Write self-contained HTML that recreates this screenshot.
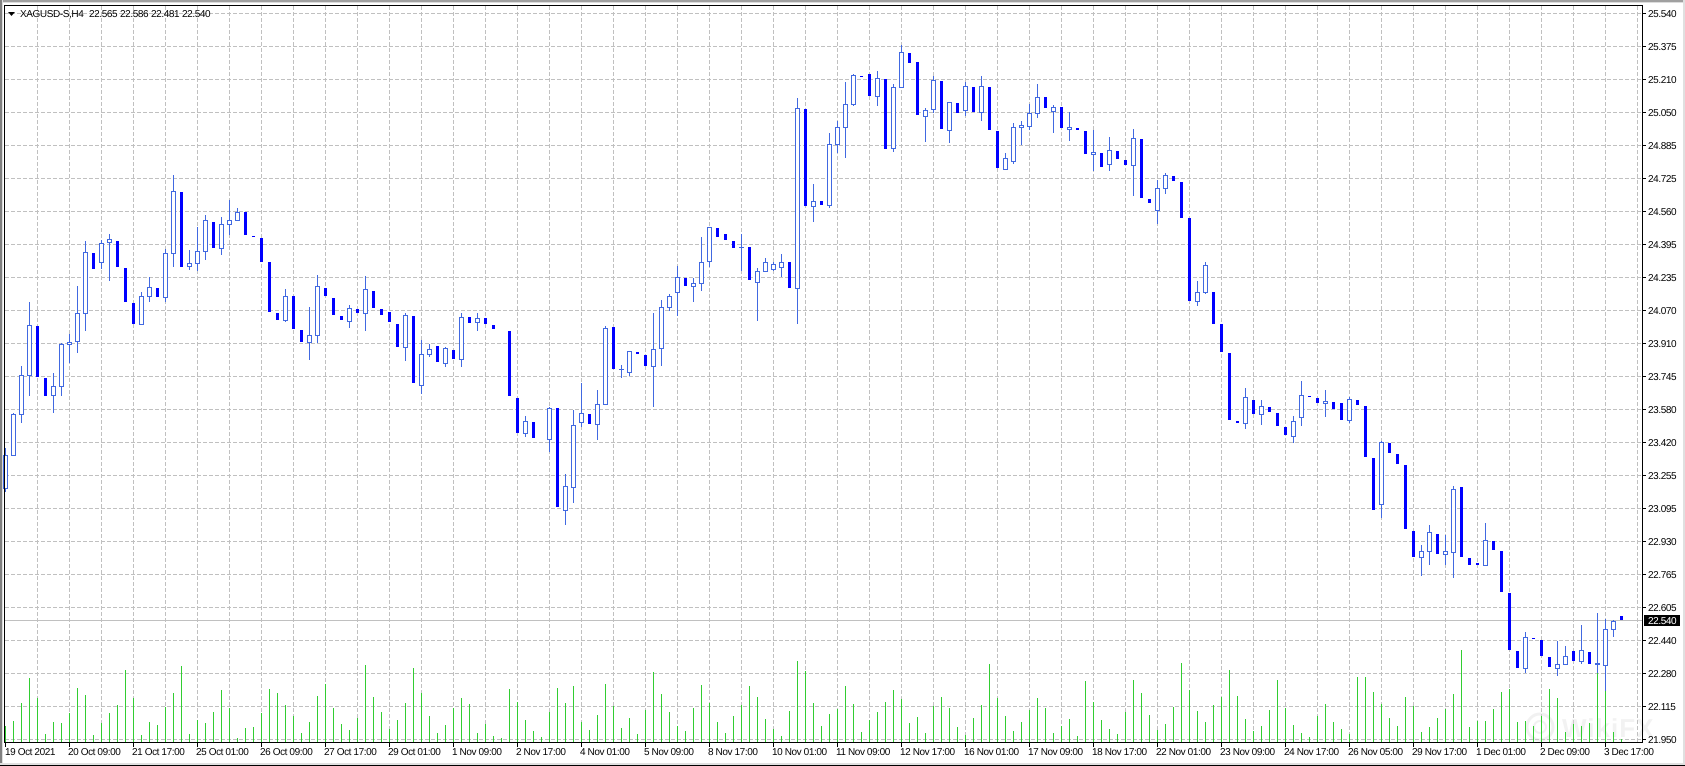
<!DOCTYPE html>
<html><head><meta charset="utf-8"><title>XAGUSD-S,H4</title>
<style>
html,body{margin:0;padding:0;background:#fff;width:1685px;height:766px;overflow:hidden}
svg{display:block}
text{font-family:"Liberation Sans",sans-serif;font-size:10px;letter-spacing:-.4px;fill:#000;text-rendering:geometricPrecision}
</style></head><body>
<svg xmlns="http://www.w3.org/2000/svg" width="1685" height="766" viewBox="0 0 1685 766">
<rect width="1685" height="766" fill="#fff"/>
<!-- grid -->
<path fill="none" stroke="#c0c0c0" stroke-dasharray="4 2" d="M5 13.5H1642M5 46.5H1642M5 79.5H1642M5 112.5H1642M5 145.5H1642M5 178.5H1642M5 211.5H1642M5 244.5H1642M5 277.5H1642M5 310.5H1642M5 343.5H1642M5 376.5H1642M5 409.5H1642M5 442.5H1642M5 475.5H1642M5 508.5H1642M5 541.5H1642M5 574.5H1642M5 607.5H1642M5 640.5H1642M5 673.5H1642M5 706.5H1642M5 739.5H1642"/>
<path fill="none" stroke="#c0c0c0" stroke-dasharray="4 2" d="M37.5 6V742M69.5 6V742M101.5 6V742M133.5 6V742M165.5 6V742M197.5 6V742M229.5 6V742M261.5 6V742M293.5 6V742M325.5 6V742M357.5 6V742M389.5 6V742M421.5 6V742M453.5 6V742M485.5 6V742M517.5 6V742M549.5 6V742M581.5 6V742M613.5 6V742M645.5 6V742M677.5 6V742M709.5 6V742M741.5 6V742M773.5 6V742M805.5 6V742M837.5 6V742M869.5 6V742M901.5 6V742M933.5 6V742M965.5 6V742M997.5 6V742M1029.5 6V742M1061.5 6V742M1093.5 6V742M1125.5 6V742M1157.5 6V742M1189.5 6V742M1221.5 6V742M1253.5 6V742M1285.5 6V742M1317.5 6V742M1349.5 6V742M1381.5 6V742M1413.5 6V742M1445.5 6V742M1477.5 6V742M1509.5 6V742M1541.5 6V742M1573.5 6V742M1605.5 6V742M1637.5 6V742"/>
<!-- watermark -->
<g opacity=".35"><circle cx="1540" cy="727" r="13" fill="none" stroke="#d8d8d8" stroke-width="3"/><circle cx="1540" cy="727" r="6" fill="none" stroke="#d8d8d8" stroke-width="2"/><text x="1562" y="737" style="font-size:26px;font-weight:bold;letter-spacing:1px;fill:#dcdcdc">WikiFX</text></g>
<!-- volumes -->
<path fill="none" stroke="#32cd32" d="M5.5 726V742M13.5 721V742M21.5 703V742M29.5 678V742M37.5 698V742M45.5 734V742M53.5 722V742M61.5 723V742M69.5 713V742M77.5 688V742M85.5 695V742M93.5 735V742M101.5 723V742M109.5 713V742M117.5 705V742M125.5 670V742M133.5 698V742M141.5 735V742M149.5 722V742M157.5 725V742M165.5 707V742M173.5 693V742M181.5 666V742M189.5 734V742M197.5 720V742M205.5 723V742M213.5 712V742M221.5 690V742M229.5 708V742M237.5 738V742M245.5 728V742M253.5 727V742M261.5 713V742M269.5 689V742M277.5 693V742M285.5 705V742M293.5 716V742M301.5 733V742M309.5 722V742M317.5 696V742M325.5 684V742M333.5 708V742M341.5 724V742M349.5 730V742M357.5 718V742M365.5 665V742M373.5 697V742M381.5 712V742M389.5 729V742M397.5 720V742M405.5 703V742M413.5 668V742M421.5 693V742M429.5 716V742M437.5 733V742M445.5 725V742M453.5 708V742M461.5 698V742M469.5 704V742M477.5 733V742M485.5 724V742M493.5 736V742M501.5 738V742M509.5 689V742M517.5 702V742M525.5 720V742M533.5 731V742M541.5 737V742M549.5 712V742M557.5 688V742M565.5 703V742M573.5 686V742M581.5 722V742M589.5 730V742M597.5 715V742M605.5 684V742M613.5 706V742M621.5 728V742M629.5 718V742M637.5 734V742M645.5 710V742M653.5 672V742M661.5 694V742M669.5 712V742M677.5 726V742M685.5 731V742M693.5 708V742M701.5 685V742M709.5 703V742M717.5 722V742M725.5 733V742M733.5 716V742M741.5 705V742M749.5 686V742M757.5 697V742M765.5 719V742M773.5 729V742M781.5 736V742M789.5 711V742M797.5 661V742M805.5 671V742M813.5 703V742M821.5 726V742M829.5 714V742M837.5 709V742M845.5 686V742M853.5 704V742M861.5 732V742M869.5 720V742M877.5 712V742M885.5 702V742M893.5 690V742M901.5 699V742M909.5 723V742M917.5 717V742M925.5 733V742M933.5 706V742M941.5 697V742M949.5 708V742M957.5 727V742M965.5 735V742M973.5 718V742M981.5 705V742M989.5 664V742M997.5 698V742M1005.5 716V742M1013.5 731V742M1021.5 722V742M1029.5 710V742M1037.5 698V742M1045.5 708V742M1053.5 733V742M1061.5 726V742M1069.5 719V742M1077.5 736V742M1085.5 681V742M1093.5 702V742M1101.5 720V742M1109.5 729V742M1117.5 734V742M1125.5 712V742M1133.5 680V742M1141.5 693V742M1149.5 715V742M1157.5 730V742M1165.5 724V742M1173.5 707V742M1181.5 663V742M1189.5 690V742M1197.5 711V742M1205.5 722V742M1213.5 705V742M1221.5 697V742M1229.5 670V742M1237.5 696V742M1245.5 719V742M1253.5 731V742M1261.5 726V742M1269.5 710V742M1277.5 680V742M1285.5 708V742M1293.5 725V742M1301.5 733V742M1309.5 737V742M1317.5 716V742M1325.5 704V742M1333.5 722V742M1341.5 729V742M1349.5 734V742M1357.5 677V742M1365.5 677V742M1373.5 692V742M1381.5 704V742M1389.5 718V742M1397.5 726V742M1405.5 697V742M1413.5 706V742M1421.5 732V742M1429.5 727V742M1437.5 718V742M1445.5 709V742M1453.5 694V742M1461.5 650V742M1469.5 727V742M1477.5 721V742M1485.5 721V742M1493.5 709V742M1501.5 692V742M1509.5 689V742M1517.5 722V742M1525.5 721V742M1533.5 726V742M1541.5 716V742M1549.5 689V742M1557.5 698V742M1565.5 732V742M1573.5 724V742M1581.5 726V742M1589.5 723V742M1597.5 673V742M1605.5 691V742M1613.5 732V742M1621.5 739V742"/>
<!-- last price line -->
<path stroke="#c0c0c0" d="M5 620.5H1642"/>
<!-- wicks -->
<path fill="none" stroke="#4169e1" d="M5.5 448V492M13.5 413V455M21.5 366V423M29.5 302V396M53.5 373V413M61.5 343V396M69.5 334V363M77.5 286V353M85.5 241V331M101.5 240V269M109.5 234V281M141.5 292V324M149.5 277V302M165.5 249V302M173.5 175V267M189.5 250V270M197.5 227V271M205.5 215V260M221.5 217V255M229.5 200V235M237.5 208V220M285.5 289V322M309.5 307V360M317.5 275V343M349.5 305V328M365.5 276V331M405.5 313V361M421.5 340V394M429.5 344V357M445.5 347V367M461.5 313V367M477.5 313V331M525.5 416V437M549.5 407V452M565.5 474V525M573.5 410V503M581.5 383V427M597.5 390V440M605.5 326V404M621.5 365V378M619 369.5h5M629.5 351V376M653.5 313V407M661.5 300V366M669.5 294V311M677.5 266V316M693.5 278V302M701.5 237V291M709.5 227V267M741.5 234V271M739 247.5h5M757.5 268V321M765.5 258V272M773.5 262V271M781.5 254V277M797.5 98V324M813.5 184V222M829.5 133V208M837.5 121V153M845.5 82V158M853.5 74V106M877.5 71V106M893.5 84V152M901.5 45V87M925.5 108V142M933.5 76V113M949.5 102V143M965.5 82V116M981.5 76V121M1005.5 153V169M1013.5 123V164M1021.5 121V145M1029.5 104V130M1037.5 84V118M1053.5 105V133M1069.5 112V141M1093.5 130V171M1109.5 137V171M1133.5 129V196M1157.5 180V224M1165.5 173V194M1197.5 281V306M1205.5 262V294M1245.5 388V429M1261.5 400V425M1293.5 416V443M1301.5 381V426M1325.5 390V417M1349.5 397V423M1381.5 441V518M1421.5 545V576M1429.5 525V565M1445.5 535V565M1453.5 486V578M1485.5 523V565M1525.5 632V673M1557.5 641V676M1565.5 646V664M1581.5 625V664M1597.5 613V673M1605.5 619V691M1613.5 620V637"/>
<!-- bull bodies -->
<path fill="#fff" stroke="#4169e1" d="M3.5 455.5h4v33h-4zM11.5 414.5h4v41h-4zM19.5 375.5h4v39h-4zM27.5 325.5h4v50h-4zM51.5 386.5h4v9h-4zM59.5 344.5h4v42h-4zM67.5 342.5h4v2h-4zM75.5 313.5h4v28h-4zM83.5 252.5h4v61h-4zM99.5 243.5h4v19h-4zM107.5 239.5h4v3h-4zM139.5 296.5h4v28h-4zM147.5 287.5h4v9h-4zM163.5 253.5h4v44h-4zM171.5 191.5h4v62h-4zM187.5 263.5h4v3h-4zM195.5 251.5h4v12h-4zM203.5 220.5h4v31h-4zM219.5 224.5h4v24h-4zM227.5 220.5h4v4h-4zM235.5 212.5h4v8h-4zM283.5 296.5h4v24h-4zM307.5 335.5h4v7h-4zM315.5 286.5h4v49h-4zM347.5 308.5h4v13h-4zM363.5 289.5h4v24h-4zM403.5 315.5h4v32h-4zM419.5 354.5h4v31h-4zM427.5 349.5h4v5h-4zM443.5 348.5h4v15h-4zM459.5 317.5h4v42h-4zM475.5 318.5h4v4h-4zM523.5 421.5h4v12h-4zM547.5 408.5h4v31h-4zM563.5 486.5h4v24h-4zM571.5 425.5h4v62h-4zM579.5 413.5h4v9h-4zM595.5 404.5h4v20h-4zM603.5 328.5h4v76h-4zM627.5 351.5h4v21h-4zM651.5 349.5h4v17h-4zM659.5 307.5h4v41h-4zM667.5 296.5h4v11h-4zM675.5 277.5h4v15h-4zM691.5 283.5h4v3h-4zM699.5 262.5h4v21h-4zM707.5 227.5h4v34h-4zM755.5 271.5h4v11h-4zM763.5 262.5h4v9h-4zM771.5 264.5h4v5h-4zM779.5 262.5h4v5h-4zM795.5 108.5h4v180h-4zM811.5 201.5h4v5h-4zM827.5 144.5h4v61h-4zM835.5 127.5h4v17h-4zM843.5 104.5h4v23h-4zM851.5 75.5h4v29h-4zM875.5 78.5h4v18h-4zM891.5 87.5h4v61h-4zM899.5 52.5h4v35h-4zM923.5 110.5h4v6h-4zM931.5 80.5h4v29h-4zM947.5 102.5h4v28h-4zM963.5 86.5h4v24h-4zM979.5 86.5h4v26h-4zM1003.5 158.5h4v11h-4zM1011.5 127.5h4v34h-4zM1019.5 125.5h4v2h-4zM1027.5 113.5h4v13h-4zM1035.5 97.5h4v16h-4zM1051.5 107.5h4v4h-4zM1067.5 127.5h4v2h-4zM1091.5 152.5h4v2h-4zM1107.5 150.5h4v14h-4zM1131.5 138.5h4v27h-4zM1155.5 188.5h4v22h-4zM1163.5 175.5h4v13h-4zM1195.5 292.5h4v9h-4zM1203.5 265.5h4v27h-4zM1243.5 397.5h4v26h-4zM1259.5 406.5h4v8h-4zM1291.5 421.5h4v15h-4zM1299.5 395.5h4v22h-4zM1323.5 401.5h4v2h-4zM1347.5 399.5h4v21h-4zM1379.5 442.5h4v62h-4zM1419.5 551.5h4v6h-4zM1427.5 532.5h4v19h-4zM1443.5 551.5h4v3h-4zM1451.5 489.5h4v63h-4zM1483.5 540.5h4v25h-4zM1523.5 637.5h4v31h-4zM1555.5 664.5h4v4h-4zM1563.5 656.5h4v8h-4zM1579.5 650.5h4v11h-4zM1595.5 663.5h4v1h-4zM1603.5 629.5h4v36h-4zM1611.5 621.5h4v8h-4z"/>
<!-- bear bodies -->
<path fill="#0000ff" d="M36 326h3v51h-3zM44 378h3v18h-3zM92 253h3v16h-3zM116 241h3v26h-3zM124 268h3v34h-3zM132 303h3v21h-3zM156 288h3v9h-3zM180 192h3v75h-3zM212 222h3v26h-3zM244 212h3v23h-3zM252 236h3v1h-3zM260 238h3v24h-3zM268 262h3v50h-3zM276 313h3v7h-3zM292 296h3v33h-3zM300 330h3v12h-3zM324 288h3v8h-3zM332 298h3v17h-3zM340 316h3v4h-3zM356 309h3v4h-3zM372 291h3v17h-3zM380 309h3v6h-3zM388 312h3v10h-3zM396 324h3v23h-3zM412 316h3v67h-3zM436 346h3v16h-3zM452 350h3v9h-3zM468 317h3v6h-3zM484 318h3v6h-3zM492 325h3v4h-3zM508 331h3v65h-3zM516 398h3v35h-3zM532 422h3v16h-3zM556 408h3v99h-3zM588 414h3v10h-3zM612 327h3v42h-3zM636 352h3v2h-3zM644 355h3v11h-3zM684 278h3v8h-3zM716 228h3v9h-3zM724 234h3v6h-3zM732 241h3v7h-3zM748 247h3v33h-3zM788 262h3v26h-3zM804 109h3v97h-3zM820 201h3v4h-3zM860 76h3v1h-3zM868 74h3v22h-3zM884 79h3v70h-3zM908 53h3v10h-3zM916 62h3v53h-3zM940 81h3v48h-3zM956 103h3v10h-3zM972 87h3v25h-3zM988 87h3v43h-3zM996 131h3v37h-3zM1044 97h3v11h-3zM1060 107h3v21h-3zM1076 128h3v2h-3zM1084 131h3v23h-3zM1100 153h3v14h-3zM1116 151h3v8h-3zM1124 160h3v5h-3zM1140 139h3v59h-3zM1148 199h3v4h-3zM1172 176h3v5h-3zM1180 182h3v36h-3zM1188 218h3v83h-3zM1212 292h3v32h-3zM1220 324h3v28h-3zM1228 353h3v67h-3zM1236 421h3v2h-3zM1252 400h3v14h-3zM1268 407h3v5h-3zM1276 413h3v13h-3zM1284 427h3v8h-3zM1308 396h3v1h-3zM1316 398h3v5h-3zM1332 402h3v7h-3zM1340 403h3v17h-3zM1356 400h3v5h-3zM1364 406h3v51h-3zM1372 458h3v52h-3zM1388 443h3v10h-3zM1396 454h3v10h-3zM1404 465h3v64h-3zM1412 531h3v26h-3zM1436 534h3v20h-3zM1460 487h3v70h-3zM1468 558h3v7h-3zM1476 563h3v2h-3zM1492 541h3v9h-3zM1500 551h3v41h-3zM1508 593h3v57h-3zM1516 651h3v17h-3zM1532 638h3v1h-3zM1540 640h3v16h-3zM1548 657h3v10h-3zM1572 651h3v10h-3zM1588 652h3v12h-3zM1620 616h3v4h-3z"/>
<!-- window edges -->
<rect x="0" y="0" width="1685" height="2" fill="#a0a0a0"/>
<rect x="0" y="2" width="1685" height="1" fill="#dcdcdc"/>
<rect x="0" y="0" width="2" height="763" fill="#808080"/>
<rect x="2" y="0" width="1" height="763" fill="#dcdcdc"/>
<rect x="1683" y="0" width="2" height="764" fill="#e0e0e0"/>
<rect x="0" y="763" width="1685" height="2" fill="#e0e0e0"/>
<rect x="0" y="765" width="1685" height="1" fill="#000"/>
<!-- chart frame -->
<path fill="none" stroke="#000" d="M4.5 743V5.5H1642.5V742.5H4.5"/>
<!-- axis ticks -->
<path stroke="#000" d="M1643 13.5h3M1643 46.5h3M1643 79.5h3M1643 112.5h3M1643 145.5h3M1643 178.5h3M1643 211.5h3M1643 244.5h3M1643 277.5h3M1643 310.5h3M1643 343.5h3M1643 376.5h3M1643 409.5h3M1643 442.5h3M1643 475.5h3M1643 508.5h3M1643 541.5h3M1643 574.5h3M1643 607.5h3M1643 640.5h3M1643 673.5h3M1643 706.5h3M1643 739.5h3M5.5 743v4M69.5 743v4M133.5 743v4M197.5 743v4M261.5 743v4M325.5 743v4M389.5 743v4M453.5 743v4M517.5 743v4M581.5 743v4M645.5 743v4M709.5 743v4M773.5 743v4M837.5 743v4M901.5 743v4M965.5 743v4M1029.5 743v4M1093.5 743v4M1157.5 743v4M1221.5 743v4M1285.5 743v4M1349.5 743v4M1413.5 743v4M1477.5 743v4M1541.5 743v4M1605.5 743v4"/>
<!-- header -->
<path d="M8 12h7l-3.5 4z" fill="#000"/>
<text x="20" y="17">XAGUSD-S,H4</text>
<text x="89" y="17">22.565</text>
<text x="120" y="17">22.586</text>
<text x="151" y="17">22.481</text>
<text x="182" y="17">22.540</text>
<!-- price labels -->
<g>
<text x="1648" y="17">25.540</text>
<text x="1648" y="50">25.375</text>
<text x="1648" y="83">25.210</text>
<text x="1648" y="116">25.050</text>
<text x="1648" y="149">24.885</text>
<text x="1648" y="182">24.725</text>
<text x="1648" y="215">24.560</text>
<text x="1648" y="248">24.395</text>
<text x="1648" y="281">24.235</text>
<text x="1648" y="314">24.070</text>
<text x="1648" y="347">23.910</text>
<text x="1648" y="380">23.745</text>
<text x="1648" y="413">23.580</text>
<text x="1648" y="446">23.420</text>
<text x="1648" y="479">23.255</text>
<text x="1648" y="512">23.095</text>
<text x="1648" y="545">22.930</text>
<text x="1648" y="578">22.765</text>
<text x="1648" y="611">22.605</text>
<text x="1648" y="644">22.440</text>
<text x="1648" y="677">22.280</text>
<text x="1648" y="710">22.115</text>
<text x="1648" y="743">21.950</text>
</g>
<rect x="1644" y="615" width="36" height="11" fill="#000"/>
<text x="1648" y="624" style="fill:#fff">22.540</text>
<!-- time labels -->
<g>
<text x="5" y="755">19 Oct 2021</text>
<text x="68" y="755">20 Oct 09:00</text>
<text x="132" y="755">21 Oct 17:00</text>
<text x="196" y="755">25 Oct 01:00</text>
<text x="260" y="755">26 Oct 09:00</text>
<text x="324" y="755">27 Oct 17:00</text>
<text x="388" y="755">29 Oct 01:00</text>
<text x="452" y="755">1 Nov 09:00</text>
<text x="516" y="755">2 Nov 17:00</text>
<text x="580" y="755">4 Nov 01:00</text>
<text x="644" y="755">5 Nov 09:00</text>
<text x="708" y="755">8 Nov 17:00</text>
<text x="772" y="755">10 Nov 01:00</text>
<text x="836" y="755">11 Nov 09:00</text>
<text x="900" y="755">12 Nov 17:00</text>
<text x="964" y="755">16 Nov 01:00</text>
<text x="1028" y="755">17 Nov 09:00</text>
<text x="1092" y="755">18 Nov 17:00</text>
<text x="1156" y="755">22 Nov 01:00</text>
<text x="1220" y="755">23 Nov 09:00</text>
<text x="1284" y="755">24 Nov 17:00</text>
<text x="1348" y="755">26 Nov 05:00</text>
<text x="1412" y="755">29 Nov 17:00</text>
<text x="1476" y="755">1 Dec 01:00</text>
<text x="1540" y="755">2 Dec 09:00</text>
<text x="1604" y="755">3 Dec 17:00</text>
</g>
</svg>
</body></html>
